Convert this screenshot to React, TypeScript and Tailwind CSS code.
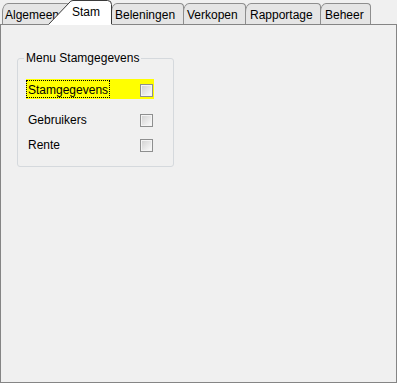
import React from "react";

const tabs = [
    { label: "Beleningen", w: "w-[73px]", pl: "pl-[3px]" },
    { label: "Verkopen", w: "w-[63px]", pl: "pl-[3px]" },
    { label: "Rapportage", w: "w-[76px]", pl: "pl-[4px]" },
    { label: "Beheer", w: "w-[51px]", pl: "pl-[4px]" },
];

function CheckBox() {
    return (
        <span className="mr-[1px] mt-[2px] box-border flex h-[13px] w-[13px] border border-[#8e8f8f] bg-[#f4f4f4] p-[1px]">
            <span className="h-full w-full bg-gradient-to-br from-[#d4d4d4] to-[#f9f9f9]" />
        </span>
    );
}

function Row({ label, focused, className }: { label: string; focused?: boolean; className?: string }) {
    return (
        <div className={`flex h-[20px] w-[128px] items-center justify-between ${focused ? "bg-[#ffff00]" : ""} ${className ?? ""}`}>
            <span
                className={`box-border h-[18px] border px-[1px] pt-[3px] leading-[13px] ${
                    focused ? "border-dotted border-black" : "border-transparent"
                }`}
            >
                {label}
            </span>
            <CheckBox />
        </div>
    );
}

export default function App() {
    return (
        <div className="flex h-[383px] w-[397px] flex-col bg-[#f0f0f0] font-['Liberation_Sans',Arial,sans-serif] text-[12px] text-black">
            {/* tab strip */}
            <div className="flex h-[24px] items-end">
                <div className="ml-[2px] box-border h-[21px] w-[68px] rounded-tl-[6px_9px] rounded-tr-[4px] border border-b-0 border-[#8e8e8e] bg-[#e5e5e5] pl-[2px] pt-[4px] leading-[14px]">
                    Algemeen
                </div>

                <div className="relative z-10 -ml-[22px] h-[24px] w-[64px] shrink-0">
                    <svg className="absolute left-0 top-0" width="64" height="25" viewBox="0 0 64 25">
                        <path d="M0 25 L0.5 24.5 L21 3 Q22.5 0.5 25 0.5 L59.5 0.5 Q63.5 0.5 63.5 4.5 L63.5 25 Z" fill="#ffffff" />
                        <path d="M0.5 24.5 L21 3 Q22.5 0.5 25 0.5 L59.5 0.5 Q63.5 0.5 63.5 4.5 L63.5 24" fill="none" stroke="#3a3a3a" strokeWidth="1" />
                    </svg>
                    <span className="relative block pl-[24px] pt-[5px] leading-[14px]">Stam</span>
                </div>

                {tabs.map((t) => (
                    <div
                        key={t.label}
                        className={`-ml-[1px] box-border h-[21px] shrink-0 ${t.w} ${t.pl} rounded-tl-[6px_9px] rounded-tr-[4px] border border-b-0 border-[#8e8e8e] bg-[#e5e5e5] pt-[4px] leading-[14px]`}
                    >
                        {t.label}
                    </div>
                ))}
            </div>

            {/* panel */}
            <div className="box-border flex-1 border border-[#858585] pl-[16px] pt-[26px]">
                <fieldset className="box-border w-[157px] rounded-[3px] border border-[#d5d9dd] pb-[12px] pl-[8px] pt-[13px]">
                    <legend className="ml-[-2px] px-[2px] leading-[15px]">Menu Stamgegevens</legend>
                    <Row label="Stamgegevens" focused />
                    <Row label="Gebruikers" className="mt-[10px]" />
                    <Row label="Rente" className="mt-[5px]" />
                </fieldset>
            </div>
        </div>
    );
}
